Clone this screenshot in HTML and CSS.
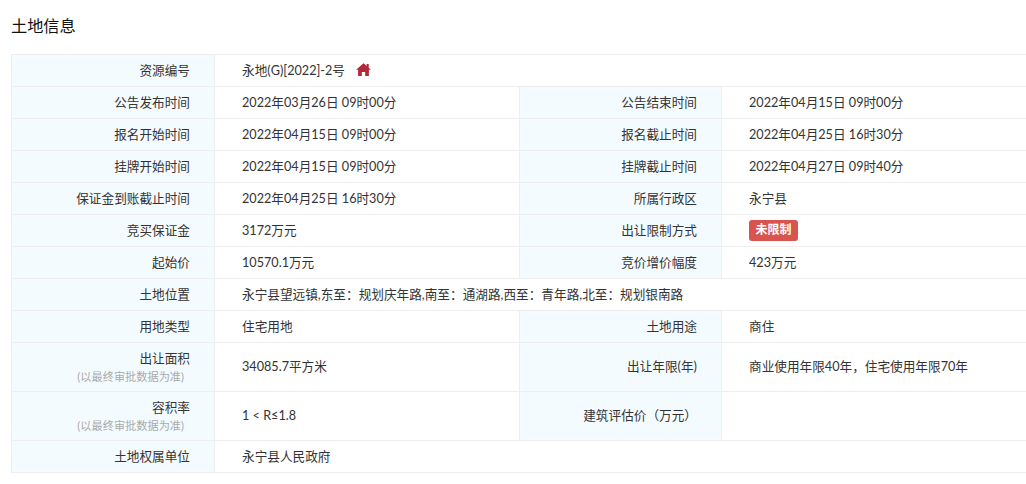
FILE: index.html
```html
<!DOCTYPE html>
<html lang="zh">
<head>
<meta charset="utf-8">
<title>土地信息</title>
<link rel="stylesheet" href="styles.css">
</head>
<body>
<h2 class="title">土地信息</h2>
<table class="info">
<colgroup><col class="c1"><col class="c2"><col class="c3"><col class="c4"></colgroup>
<tr><th>资源编号</th><td colspan="3">永地(G)[2022]-2号<svg class="home" viewBox="0 0 16 14"><path d="M8 .4 0 7.4h2.2V14h4v-4.4h3.6V14h4V7.4H16L13.6 5.2V1.2h-2.2v2z"/></svg></td></tr>
<tr><th>公告发布时间</th><td>2022年03月26日 09时00分</td><th>公告结束时间</th><td>2022年04月15日 09时00分</td></tr>
<tr><th>报名开始时间</th><td>2022年04月15日 09时00分</td><th>报名截止时间</th><td>2022年04月25日 16时30分</td></tr>
<tr><th>挂牌开始时间</th><td>2022年04月15日 09时00分</td><th>挂牌截止时间</th><td>2022年04月27日 09时40分</td></tr>
<tr><th>保证金到账截止时间</th><td>2022年04月25日 16时30分</td><th>所属行政区</th><td>永宁县</td></tr>
<tr><th>竞买保证金</th><td>3172万元</td><th>出让限制方式</th><td><span class="tag">未限制</span></td></tr>
<tr><th>起始价</th><td>10570.1万元</td><th>竞价增价幅度</th><td>423万元</td></tr>
<tr><th>土地位置</th><td colspan="3">永宁县望远镇,东至：规划庆年路,南至：通湖路,西至：青年路,北至：规划银南路</td></tr>
<tr><th>用地类型</th><td>住宅用地</td><th>土地用途</th><td>商住</td></tr>
<tr class="tall"><th>出让面积<small>(以最终审批数据为准)</small></th><td>34085.7平方米</td><th>出让年限(年)</th><td>商业使用年限40年，住宅使用年限70年</td></tr>
<tr class="tall"><th>容积率<small>(以最终审批数据为准)</small></th><td>1 &lt; R≤1.8</td><th>建筑评估价（万元）</th><td></td></tr>
<tr><th>土地权属单位</th><td colspan="3">永宁县人民政府</td></tr>
</table>
</body>
</html>
```
FILE: styles.css
```css
html, body { margin: 0; padding: 0; background: #fff; }
body {
  font-family: "Lato", "Noto Sans CJK SC", sans-serif;
  font-size: 12.65px;
  color: #333;
  padding: 0 0 0 11px;
  overflow: hidden;
}
.title {
  margin: 0;
  height: 54px;
  padding-top: 14px;
  box-sizing: border-box;
  font-family: "Noto Sans CJK SC", sans-serif;
  font-size: 16.2px;
  font-weight: 400;
  line-height: 22px;
  color: #111;
}
.info {
  border-collapse: collapse;
  table-layout: fixed;
  width: 1015px;
}
.c1 { width: 203px; }
.c2 { width: 305px; }
.c3 { width: 202px; }
.c4 { width: 305px; }
.info tr { height: 32px; }
.info tr.tall { height: 49px; }
.info th, .info td {
  border: 1px solid #eeeeee;
  padding: 0;
  line-height: 20px;
  font-weight: 400;
  vertical-align: middle;
}
.info th {
  background: #f4fbff;
  text-align: right;
  padding-right: 24px;
}
.info td {
  padding-left: 27px;
  background: #fff;
}
.info small {
  display: block;
  font-size: 11.2px;
  line-height: 16px;
  color: #aaa;
  padding-right: 6px;
}
.home {
  width: 15px;
  height: 13px;
  margin-left: 11px;
  vertical-align: -1px;
  fill: #b02a37;
}
.tag {
  display: inline-block;
  background: #d9534f;
  color: #fff;
  font-size: 12px;
  font-weight: 700;
  line-height: 20px;
  height: 21px;
  padding: 0 6.5px;
  border-radius: 3px;
  vertical-align: middle;
}
```
